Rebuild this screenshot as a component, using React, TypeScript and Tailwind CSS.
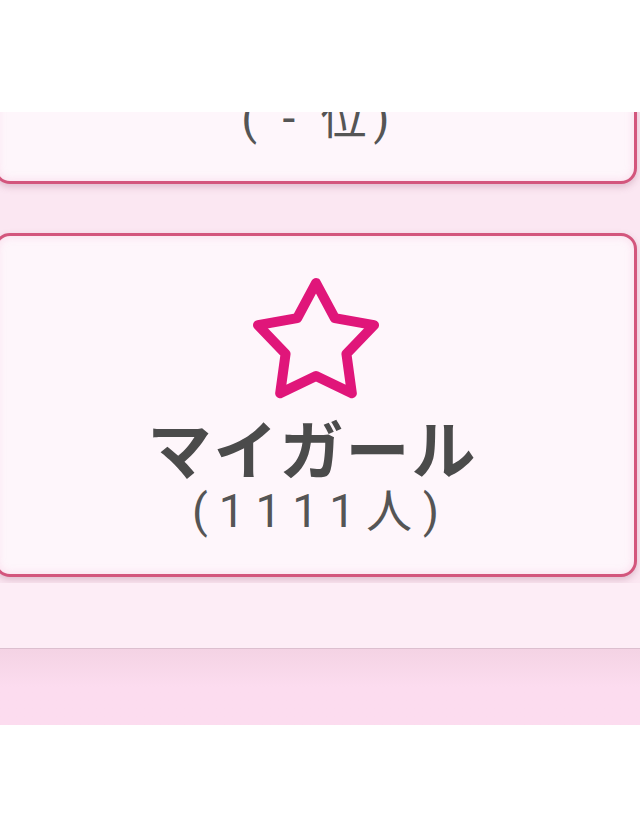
import React from "react";

// ====================================
// STAR ICON (outline, rounded joins)
// ====================================

const starPoints = (() => {
  const cx = 66;
  const cy = 67;
  const outer = 61;
  const inner = 32;
  const pts: string[] = [];
  for (let i = 0; i < 10; i++) {
    const r = i % 2 === 0 ? outer : inner;
    const a = ((-90 + i * 36) * Math.PI) / 180;
    pts.push(`${(cx + r * Math.cos(a)).toFixed(2)},${(cy + r * Math.sin(a)).toFixed(2)}`);
  }
  return pts.join(" ");
})();

function StarIcon() {
  return (
    <svg width="132" height="132" viewBox="0 0 132 132" className="block">
      <polygon
        points={starPoints}
        fill="none"
        stroke="#e0167a"
        strokeWidth="10"
        strokeLinejoin="round"
      />
    </svg>
  );
}

// ====================================
// MENU CARD
// ====================================

type CardProps = {
  title: string;
  sub: string;
  subClass: string;
  className?: string;
};

function MenuCard({ title, sub, subClass, className = "" }: CardProps) {
  return (
    <div
      className={`ml-[-6px] w-[643px] h-[344px] shrink-0 rounded-[16px] border-[3px] border-[#d3567d] bg-[#fef6fb] shadow-[0_3px_7px_rgba(150,80,110,0.28),inset_0_0_8px_rgba(240,170,205,0.35)] flex flex-col items-center pt-[41px] ${className}`}
    >
      <StarIcon />
      <p className="mt-[5px] pr-[6px] text-[64px] leading-[64px] font-bold tracking-[2px] text-[#4b4b4b] whitespace-nowrap">
        {title}
      </p>
      <p
        className={`mt-[10px] text-[46px] leading-[46px] text-[#555555] whitespace-nowrap ${subClass}`}
        style={{ fontFamily: 'Roboto, "Noto Sans CJK JP", sans-serif' }}
      >
        {sub}
      </p>
    </div>
  );
}

// ====================================
// PAGE
// ====================================

export default function App() {
  return (
    <div
      className="w-[640px] h-[840px] bg-white overflow-hidden"
      style={{ fontFamily: '"Noto Sans CJK JP", "Noto Sans", sans-serif' }}
    >
      <div className="h-[112px] bg-white" />

      <div className="h-[613px] overflow-hidden bg-[#fbe7f2] flex flex-col">
        <MenuCard
          title="ランキング"
          sub="( - 位)"
          subClass="tracking-[7px] pl-[7px]"
          className="mt-[-272px]"
        />
        <MenuCard
          title="マイガール"
          sub="(1111人)"
          subClass="tracking-[11px] pl-[11px]"
          className="mt-[49px]"
        />

        {/* lower strip */}
        <div className="mt-[6px] h-[65px] shrink-0 bg-[#fdedf6]" />

        {/* footer bar top */}
        <div className="flex-1 border-t border-[#dcbfcf] bg-gradient-to-b from-[#f4d3e4] via-[#fcdcef] to-[#fcdcef]" />
      </div>
    </div>
  );
}
